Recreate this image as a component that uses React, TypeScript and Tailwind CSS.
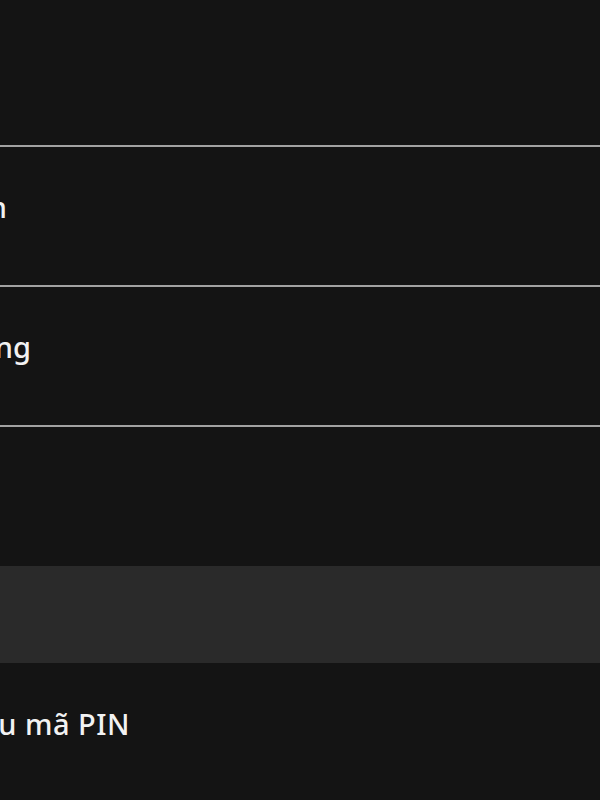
const rows = [
  { label: '', end: 0 },
  { label: 'Tài khoản', end: 7 },
  { label: 'Khóa ứng dụng', end: 31 },
];

function Row({ label, end, first }: { label: string; end: number; first?: boolean }) {
  return (
    <div
      className={`flex items-center border-b-2 border-[#a2a2a2] pb-[18px] ${first ? 'h-[147px]' : 'h-[140px]'}`}
    >
      {label && (
        // text is scrolled off to the left, only its tail is showing
        <div className="flex justify-end" style={{ width: end }}>
          <span className="shrink-0 whitespace-nowrap">{label}</span>
        </div>
      )}
    </div>
  );
}

export default function App() {
  return (
    <div
      className="h-[800px] w-[600px] overflow-hidden bg-[#141414] text-[29px] font-medium text-[#f2f2f2]"
      style={{ fontFamily: '"Noto Sans", Lato, sans-serif' }}
    >
      {rows.map((r, i) => (
        <Row key={i} label={r.label} end={r.end} first={i === 0} />
      ))}
      <div className="h-[139px]" />
      <div className="h-[97px] bg-[#2a2a2a]" />
      <div className="flex h-[140px] items-center pb-[18px]">
        <div className="flex w-[130px] justify-end">
          <span className="shrink-0 whitespace-nowrap tracking-[0.5px]">Yêu cầu mã PIN</span>
        </div>
      </div>
    </div>
  );
}
